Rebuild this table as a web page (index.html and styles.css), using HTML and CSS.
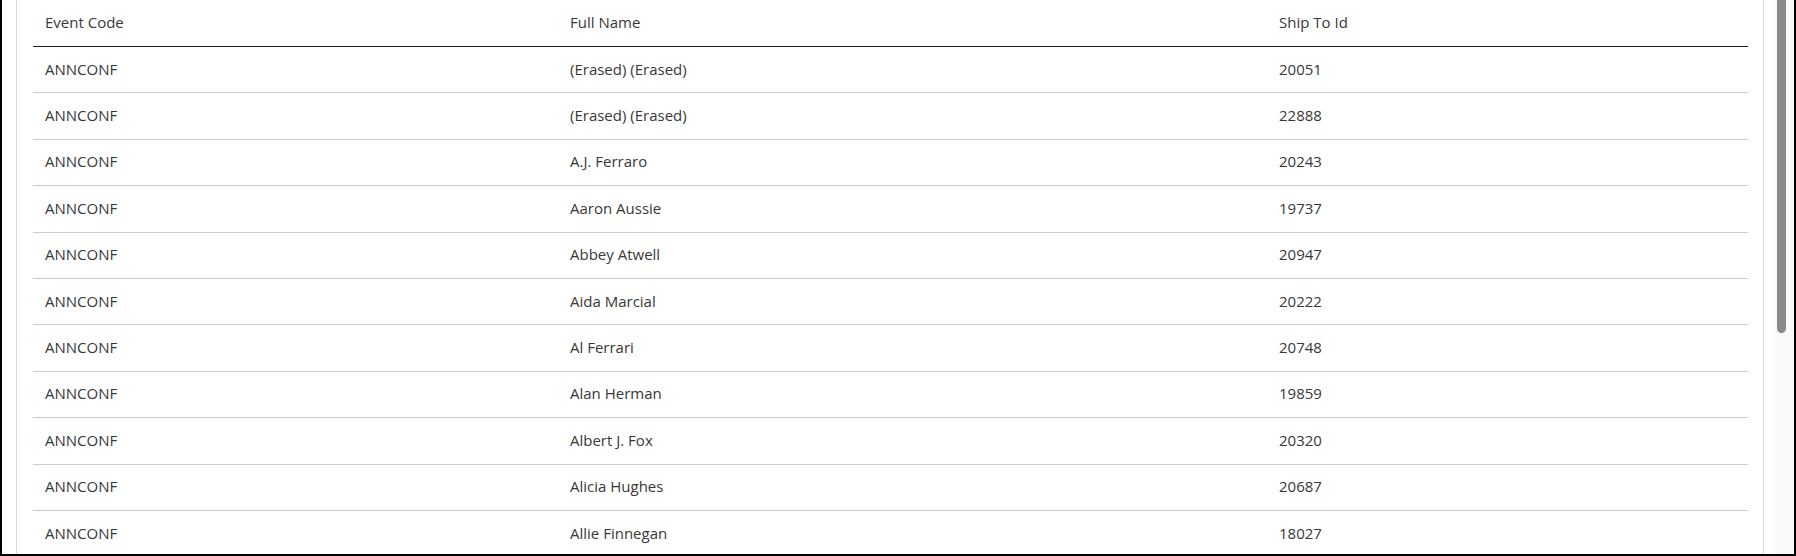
FILE: index.html
```html
<!DOCTYPE html>
<html lang="en">
<head>
<meta charset="utf-8">
<title>Event Registrations</title>
<link rel="stylesheet" href="styles.css">
</head>
<body>
<div class="frame">
  <div class="panel">
    <div class="card">
      <div class="grid">
        <div class="row head">
          <div class="cell">Event Code</div>
          <div class="cell">Full Name</div>
          <div class="cell">Ship To Id</div>
        </div>
        <div class="row"><div class="cell">ANNCONF</div><div class="cell">(Erased) (Erased)</div><div class="cell">20051</div></div>
        <div class="row"><div class="cell">ANNCONF</div><div class="cell">(Erased) (Erased)</div><div class="cell">22888</div></div>
        <div class="row"><div class="cell">ANNCONF</div><div class="cell">A.J. Ferraro</div><div class="cell">20243</div></div>
        <div class="row"><div class="cell">ANNCONF</div><div class="cell">Aaron Aussie</div><div class="cell">19737</div></div>
        <div class="row"><div class="cell">ANNCONF</div><div class="cell">Abbey Atwell</div><div class="cell">20947</div></div>
        <div class="row"><div class="cell">ANNCONF</div><div class="cell">Aida Marcial</div><div class="cell">20222</div></div>
        <div class="row"><div class="cell">ANNCONF</div><div class="cell">Al Ferrari</div><div class="cell">20748</div></div>
        <div class="row"><div class="cell">ANNCONF</div><div class="cell">Alan Herman</div><div class="cell">19859</div></div>
        <div class="row"><div class="cell">ANNCONF</div><div class="cell">Albert J. Fox</div><div class="cell">20320</div></div>
        <div class="row"><div class="cell">ANNCONF</div><div class="cell">Alicia Hughes</div><div class="cell">20687</div></div>
        <div class="row"><div class="cell">ANNCONF</div><div class="cell">Allie Finnegan</div><div class="cell">18027</div></div>
      </div>
    </div>
  </div>
  <div class="scrollbar">
    <div class="thumb"></div>
  </div>
</div>
</body>
</html>
```
FILE: styles.css
```css
html, body {
  margin: 0;
  padding: 0;
  background: #ffffff;
}

.frame {
  width: 1796px;
  height: 556px;
  box-sizing: border-box;
  border-left: 2px solid #000;
  border-right: 2px solid #000;
  border-bottom: 2px solid #000;
  display: flex;
  overflow: hidden;
  font-family: "Open Sans", "Liberation Sans", sans-serif;
  font-size: 15px;
  color: #383838;
}

.panel {
  flex: 1;
  padding-left: 14px;
  padding-right: 9px;
  display: flex;
  overflow: hidden;
}

.card {
  flex: 1;
  border-left: 1px solid #dadada;
  border-right: 1px solid #dadada;
  padding: 0 15px 0 16px;
  overflow: hidden;
}

.grid {
  display: flex;
  flex-direction: column;
}

.row {
  display: grid;
  grid-template-columns: 525px 709px 1fr;
  align-items: center;
  height: 46.4px;
  padding-bottom: 2px;
  flex: none;
  box-sizing: border-box;
  border-bottom: 1px solid #cccccc;
}

.row.head {
  height: 47px;
  border-bottom: 1px solid #1f1f1f;
}

.cell {
  padding-left: 12px;
  white-space: nowrap;
}

.scrollbar {
  width: 21px;
  flex: none;
  background: #fafafa;
}

.thumb {
  width: 9px;
  height: 333px;
  margin-left: 4px;
  background: #8a8a8a;
  border-radius: 0 0 5px 5px;
}
```
